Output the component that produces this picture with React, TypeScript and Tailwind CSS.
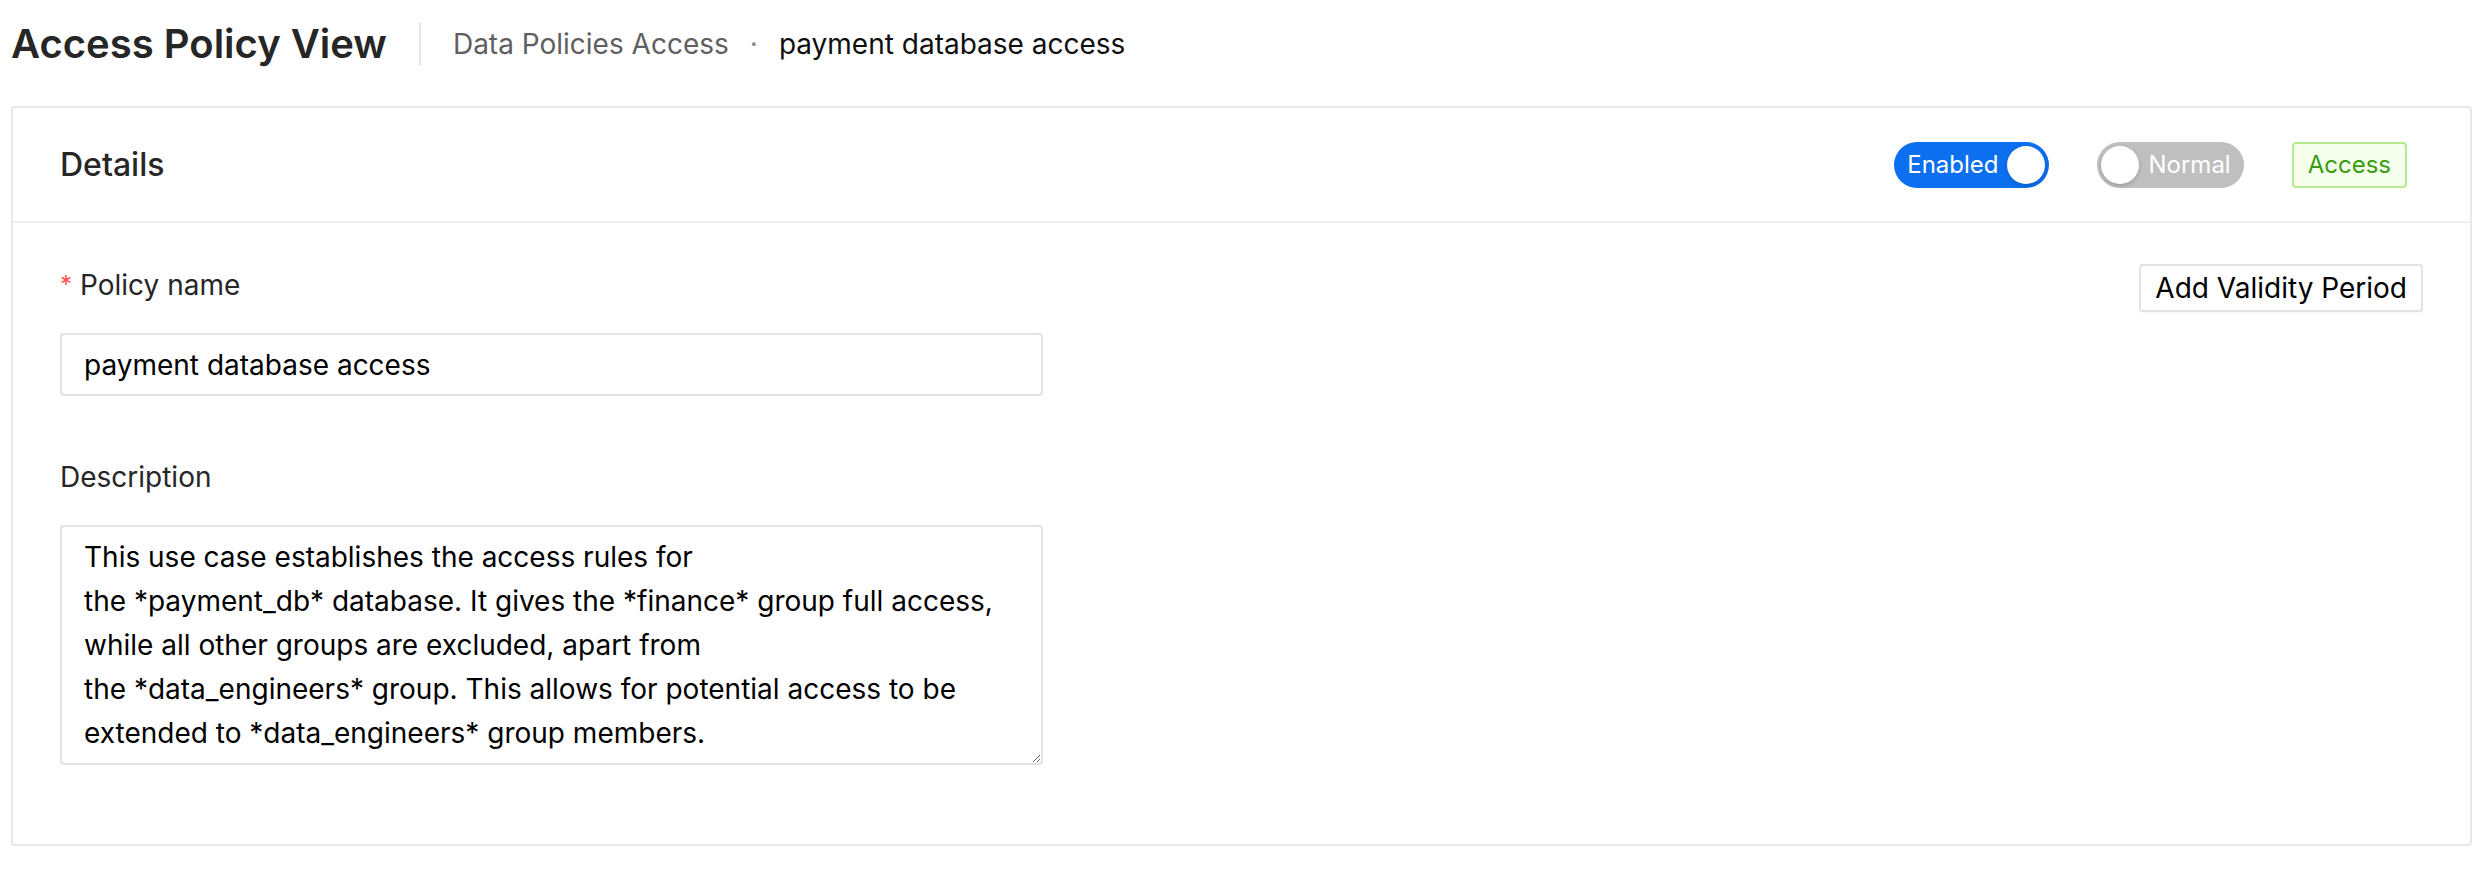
import { useState } from "react";

const description = [
  "This use case establishes the access rules for",
  "the *payment_db* database. It gives the *finance* group full access,",
  "while all other groups are excluded, apart from",
  "the *data_engineers* group. This allows for potential access to be",
  "extended to *data_engineers* group members.",
].join("\n");

function Toggle({
  on,
  label,
  onChange,
}: {
  on: boolean;
  label: string;
  onChange: () => void;
}) {
  return (
    <button
      type="button"
      onClick={onChange}
      className={
        on
          ? "flex h-[46px] items-center rounded-full bg-[#0b6fef] pl-[13px] pr-[4px] text-white"
          : "flex h-[46px] items-center rounded-full bg-[#bfbfbf] pl-[4px] pr-[13px] text-white"
      }
    >
      {on && <span className="text-[24px] leading-none">{label}</span>}
      <span
        className={
          on
            ? "ml-[9px] h-[38px] w-[38px] rounded-full bg-white shadow-[0_2px_4px_rgba(0,35,11,0.2)]"
            : "mr-[9px] h-[38px] w-[38px] rounded-full bg-white shadow-[0_2px_4px_rgba(0,35,11,0.2)]"
        }
      />
      {!on && <span className="text-[24px] leading-none">{label}</span>}
    </button>
  );
}

function App() {
  const [enabled, setEnabled] = useState(true);
  const [emergency, setEmergency] = useState(false);
  const [name, setName] = useState("payment database access");
  const [desc, setDesc] = useState(description);

  return (
    <div
      className="min-h-screen bg-white pl-[11px] pr-[18px]"
      style={{ fontFamily: "Inter, 'Liberation Sans', sans-serif" }}
    >
      <div className="flex h-[88px] items-center">
        <h1 className="text-[40px] font-semibold leading-none text-[#262626]">
          Access Policy View
        </h1>
        <div className="mx-[32px] h-[44px] w-[2px] bg-[#e6e6e6]" />
        <span className="text-[28px] text-[#5f5f5f]">Data Policies Access</span>
        <span className="mx-[21px] text-[28px] text-[#8c8c8c]">·</span>
        <span className="text-[28px] text-[#0f0f0f]">payment database access</span>
      </div>

      <div className="mt-[18px] rounded-[4px] border-2 border-[#e8e8e8]">
        <div className="flex h-[115px] items-center justify-between border-b-2 border-[#f0f0f0] pl-[47px] pr-[63px]">
          <h2 className="text-[32px] font-medium text-[#262626]">Details</h2>
          <div className="flex items-center gap-[48px]">
            <Toggle on={enabled} label="Enabled" onChange={() => setEnabled(!enabled)} />
            <Toggle on={emergency} label="Normal" onChange={() => setEmergency(!emergency)} />
            <span className="flex h-[46px] items-center rounded-[4px] border-2 border-[#b7eb8f] bg-[#f6ffed] px-[14px] text-[24px] text-[#389e0d]">
              Access
            </span>
          </div>
        </div>

        <div className="flex justify-between px-[47px] pb-[79px] pt-[40px]">
          <div className="w-[983px]">
            <label className="flex h-[44px] items-center text-[28px] text-[#262626]">
              <span className="mr-[8px] text-[24px] text-[#ff4d4f]">*</span>
              Policy name
            </label>
            <input
              value={name}
              onChange={(e) => setName(e.target.value)}
              className="mt-[26px] h-[63px] w-full rounded-[4px] border-2 border-[#e2e2e2] px-[22px] text-[28px] text-black outline-none"
            />
            <label className="mt-[59px] flex h-[44px] items-center text-[28px] text-[#262626]">
              Description
            </label>
            <textarea
              value={desc}
              onChange={(e) => setDesc(e.target.value)}
              className="mt-[26px] block h-[240px] w-full rounded-[4px] border-2 border-[#e2e2e2] px-[22px] py-[8px] text-[28px] leading-[44px] text-black outline-none"
            />
          </div>
          <div>
            <button
              type="button"
              className="mt-[1px] h-[48px] rounded-[4px] border-2 border-[#e2e2e2] bg-white px-[14px] text-[28px] leading-none text-black shadow-[0_2px_0_rgba(0,0,0,0.02)]"
            >
              Add Validity Period
            </button>
          </div>
        </div>
      </div>
    </div>
  );
}

export default App;
